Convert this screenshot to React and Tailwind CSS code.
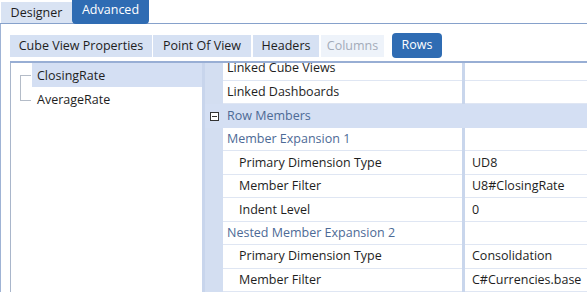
const rows = [
    { kind: 'prop', name: 'Linked Dashboards', value: '', indent: false },
    { kind: 'cat', name: 'Row Members' },
    { kind: 'sub', name: 'Member Expansion 1' },
    { kind: 'prop', name: 'Primary Dimension Type', value: 'UD8', indent: true },
    { kind: 'prop', name: 'Member Filter', value: 'U8#ClosingRate', indent: true },
    { kind: 'prop', name: 'Indent Level', value: '0', indent: true },
    { kind: 'sub', name: 'Nested Member Expansion 2' },
    { kind: 'prop', name: 'Primary Dimension Type', value: 'Consolidation', indent: true },
    { kind: 'prop', name: 'Member Filter', value: 'C#Currencies.base', indent: true },
];

const MinusBox = () => (
    <svg width="9" height="9" viewBox="0 0 9 9" className="block">
        <rect x="0.5" y="0.5" width="8" height="8" fill="#fff" stroke="#333" />
        <line x1="2" y1="4.5" x2="7" y2="4.5" stroke="#333" />
    </svg>
);

const GridRow = ({ row }) => {
    if (row.kind === 'cat') {
        return (
            <div className="flex h-[23.7px] bg-[#d4dff3]">
                <div className="w-[18px] flex items-center justify-center pl-[1px]">
                    <MinusBox />
                </div>
                <div className="flex-1 flex items-center pl-[4px] pt-[1px] text-[#4d6a96]">{row.name}</div>
            </div>
        );
    }
    return (
        <div className="flex h-[23.7px]">
            <div className="w-[18px] bg-[#d3def1]" />
            <div
                className={`w-[239px] flex items-center pt-[1px] border-b border-[#dfe6f3] ${
                    row.kind === 'sub' ? 'pl-[4px] text-[#4d6a96]' : row.indent ? 'pl-[16px] text-[#1e1e1e]' : 'pl-[4px] text-[#1e1e1e]'
                }`}
            >
                {row.name}
            </div>
            <div className="w-[3px] bg-[#c9d6ec]" />
            <div className="flex-1 flex items-center pl-[7px] pt-[1px] border-b border-[#dfe6f3] text-[#1e1e1e]">
                {row.value}
            </div>
        </div>
    );
};

export default function App() {
    return (
        <div
            className="w-[587px] h-[292px] overflow-hidden bg-white flex flex-col text-[12.5px]"
            style={{ fontFamily: '"Open Sans", "Noto Sans", sans-serif' }}
        >
            <div className="flex items-end h-[24px] border-b border-[#86a1cb] shrink-0">
                <div className="ml-[1px] h-[21px] w-[71px] bg-[#d9e3f3] text-[#1e1e1e] flex items-center justify-center pt-[1px]">
                    Designer
                </div>
                <div className="h-[25px] -mb-[1px] w-[77px] bg-[#2f6cb3] text-white rounded-b-[4px] flex items-center justify-center pb-[2px]">
                    Advanced
                </div>
            </div>

            <div className="flex-1 border-l border-[#9fb3d5] pl-[9px] pt-[10px] flex flex-col min-h-0">
                <div className="flex items-end h-[29px] pb-[4px] border-b-2 border-[#98aed4] shrink-0">
                    <div className="h-[22px] w-[142px] bg-[#d6e1f3] text-[#1e1e1e] flex items-center justify-center pt-[1px]">
                        Cube View Properties
                    </div>
                    <div className="ml-[1px] h-[22px] w-[98px] bg-[#d6e1f3] text-[#1e1e1e] flex items-center justify-center pt-[1px]">
                        Point Of View
                    </div>
                    <div className="ml-[2px] h-[22px] w-[66px] bg-[#d6e1f3] text-[#1e1e1e] flex items-center justify-center pt-[1px]">
                        Headers
                    </div>
                    <div className="ml-[2px] h-[22px] w-[63px] bg-[#eef3fa] text-[#a3abb9] flex items-center justify-center pt-[1px]">
                        Columns
                    </div>
                    <div className="ml-[8px] -mb-[1px] h-[25px] w-[50px] bg-[#2f6cb3] text-white rounded-[4px] flex items-center justify-center">
                        Rows
                    </div>
                </div>

                <div className="flex flex-1 min-h-0">
                    <div className="w-[195px] shrink-0 border-r-[3px] border-[#c8d5ec] flex flex-col">
                        <div className="flex-1 border-l border-[#a9b6cb] relative">
                            <div className="absolute left-[9px] top-[12px] w-[1px] h-[25px] bg-[#b4bcc8]" />
                            <div className="absolute left-[9px] top-[12px] w-[11px] h-[1px] bg-[#b4bcc8]" />
                            <div className="absolute left-[9px] top-[37px] w-[11px] h-[1px] bg-[#b4bcc8]" />
                            <div className="ml-[21px] h-[24px] bg-[#d4dff3] flex items-center pl-[5px] pt-[2px] text-[#1e1e1e]">
                                ClosingRate
                            </div>
                            <div className="ml-[21px] h-[25px] flex items-center pl-[5px] pt-[2px] text-[#1e1e1e]">
                                AverageRate
                            </div>
                        </div>
                    </div>

                    <div className="flex-1 flex flex-col min-w-0">
                        <div className="flex h-[18px] shrink-0">
                            <div className="w-[18px] bg-[#d3def1]" />
                            <div className="w-[239px] flex items-start pl-[4px] border-b border-[#dfe6f3] text-[#1e1e1e] overflow-hidden">
                                <span className="-mt-[4px] leading-[17px]">Linked Cube Views</span>
                            </div>
                            <div className="w-[3px] bg-[#c9d6ec]" />
                            <div className="flex-1 border-b border-[#dfe6f3]" />
                        </div>
                        {rows.map((row, i) => (
                            <GridRow key={i} row={row} />
                        ))}
                    </div>
                </div>
            </div>
        </div>
    );
}
